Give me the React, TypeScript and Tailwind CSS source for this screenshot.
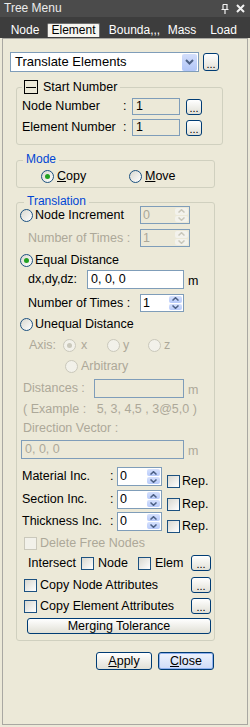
import React from 'react';

type RP = { checked?: boolean; disabled?: boolean };

function Radio({ checked = false, disabled = false }: RP) {
  return (
    <span
      className={
        disabled
          ? 'flex h-[13px] w-[13px] shrink-0 items-center justify-center rounded-full border border-[#cac8bb] bg-[#f2f1ea]'
          : 'flex h-[13px] w-[13px] shrink-0 items-center justify-center rounded-full border border-[#1c5180] bg-linear-to-br from-[#d9d8d0] to-white'
      }
    >
      {checked && (
        <span className={disabled ? 'h-[5px] w-[5px] rounded-full bg-[#cac8bb]' : 'h-[5px] w-[5px] rounded-full bg-[#21a121]'} />
      )}
    </span>
  );
}

function Check({ disabled = false }: { disabled?: boolean }) {
  return (
    <span
      className={
        disabled
          ? 'block h-[13px] w-[13px] shrink-0 border border-[#cac8bb] bg-[#f2f1ea]'
          : 'block h-[13px] w-[13px] shrink-0 border border-[#1c5180] bg-linear-to-br from-[#d9d8d0] to-white'
      }
    />
  );
}

function Dots({ className }: { className: string }) {
  return (
    <div
      className={
        'flex shrink-0 items-end justify-center rounded-[3px] border border-[#003c74] bg-linear-to-b from-white to-[#e1e0d6] pb-[3px] text-[11px] leading-[6px] text-black ' +
        className
      }
    >
      ...
    </div>
  );
}

function Chev({ up, color }: { up?: boolean; color: string }) {
  return (
    <svg width="7" height="4" viewBox="0 0 7 4">
      <path d={up ? 'M0.5 3.5 L3.5 0.7 L6.5 3.5' : 'M0.5 0.5 L3.5 3.3 L6.5 0.5'} fill="none" stroke={color} strokeWidth="1.5" />
    </svg>
  );
}

function SpinBtns({ disabled = false }: { disabled?: boolean }) {
  const c = disabled ? '#cac8bb' : '#4d6185';
  const b = disabled
    ? 'flex flex-1 items-center justify-center rounded-[2px] bg-[#f3f2ec]'
    : 'flex flex-1 items-center justify-center rounded-[2px] bg-linear-to-b from-[#d6e1fc] to-[#b7cafa]';
  return (
    <div className="flex w-[15px] shrink-0 flex-col gap-[1px] p-[1px]">
      <div className={b}>
        <Chev up color={c} />
      </div>
      <div className={b}>
        <Chev color={c} />
      </div>
    </div>
  );
}

const sep = 'Bounda,,,';

export default function App() {
  return (
    <div className="flex h-[727px] w-[250px] flex-col overflow-hidden bg-[#ece9d8] font-['Liberation_Sans',Arial,sans-serif] text-[12.5px] text-black">
      {/* Title bar */}
      <div className="flex h-[17px] shrink-0 items-center bg-[#4b4b4b] pl-[4px] text-[12px] text-[#ececec]">
        <span className="flex-1 leading-[17px]">Tree Menu</span>
        <svg width="8" height="10" viewBox="0 0 8 10" className="mr-[7px]">
          <path d="M2 0.5 H6 V5 M2 0.5 V5 M0.5 5.5 H7.5 M4 5.5 V10" fill="none" stroke="#f2f2f2" strokeWidth="1.2" />
        </svg>
        <svg width="9" height="9" viewBox="0 0 9 9" className="mr-[5px]">
          <path d="M1 1 L8 8 M8 1 L1 8" fill="none" stroke="#f2f2f2" strokeWidth="2" />
        </svg>
      </div>

      {/* Tabs */}
      <div className="flex h-[21px] shrink-0 items-end bg-[#3d3d3d] pb-[1px] pl-[5px] text-[12px]">
        <div className="h-[14px] w-[40px] text-center leading-[14px] text-white">Node</div>
        <div className="ml-[2px] h-[14px] w-[53px] rounded-t-[2px] border border-b-0 border-[#6e6e6e] bg-[#f6f5f0] text-center leading-[13px] text-black">
          Element
        </div>
        <div className="ml-[2px] h-[14px] w-[65px] text-center leading-[14px] text-white">{sep}</div>
        <div className="h-[14px] w-[30px] text-center leading-[14px] text-white">Mass</div>
        <div className="h-[14px] w-[53px] text-center leading-[14px] text-white">Load</div>
      </div>

      {/* Body */}
      <div className="flex flex-1 flex-col px-[2px] pb-[2px]">
        <div className="flex flex-1 flex-col border border-[#a9a8a2] bg-[#ece9d8]">
          {/* Dropdown */}
          <div className="ml-[7px] mt-[13px] flex items-center">
            <div className="flex h-[20px] w-[189px] items-center border border-[#7f9db9] bg-white pr-[1px]">
              <span className="flex-1 pl-[4px] text-[13px] leading-[18px]">Translate Elements</span>
              <div className="flex h-[17px] w-[15px] items-center justify-center rounded-[2px] bg-linear-to-b from-[#d3defb] to-[#b2c6f7]">
                <svg width="9" height="6" viewBox="0 0 9 6">
                  <path d="M1 1 L4.5 4.5 L8 1" fill="none" stroke="#4d6185" strokeWidth="2" />
                </svg>
              </div>
            </div>
            <Dots className="ml-[4px] h-[18px] w-[16px]" />
          </div>

          {/* Start Number group */}
          <div className="relative ml-[13px] mt-[15px] h-[58px] w-[207px] shrink-0 rounded-[3px] border border-[#d0d0bf]">
            <div className="absolute -top-[8px] left-[5px] flex h-[14px] items-center bg-[#ece9d8] pl-[2px] pr-[3px]">
              <span className="flex h-[14px] w-[14px] items-center justify-center border border-black bg-[#ece9d8]">
                <span className="h-[1px] w-[10px] bg-black" />
              </span>
              <span className="ml-[5px] leading-[13px]">Start Number</span>
            </div>
            <div className="mt-[10px] flex h-[17px] items-center pl-[5px] leading-[13px]">
              <span className="w-[101px]">Node Number</span>
              <span className="w-[9px]">:</span>
              <div className="h-[17px] w-[48px] border border-[#7f9db9] pl-[3px] leading-[15px]">1</div>
              <Dots className="ml-[6px] h-[16px] w-[16px]" />
            </div>
            <div className="mt-[4px] flex h-[17px] items-center pl-[5px] leading-[13px]">
              <span className="w-[101px]">Element Number</span>
              <span className="w-[9px]">:</span>
              <div className="h-[17px] w-[48px] border border-[#7f9db9] pl-[3px] leading-[15px]">1</div>
              <Dots className="ml-[6px] h-[16px] w-[16px]" />
            </div>
          </div>

          {/* Mode group */}
          <div className="relative ml-[13px] mt-[15px] h-[28px] w-[199px] shrink-0 rounded-[3px] border border-[#d0d0bf]">
            <div className="absolute -top-[8px] left-[6px] h-[12px] bg-[#ece9d8] px-[3px] text-[12px] leading-[12px] text-[#0046d5]">
              Mode
            </div>
            <div className="mt-[6px] flex h-[18px] items-center pl-[24px] leading-[13px]">
              <Radio checked />
              <span className="ml-[3px] w-[72px]">
                <u>C</u>opy
              </span>
              <Radio />
              <span className="ml-[3px]">
                <u>M</u>ove
              </span>
            </div>
          </div>

          {/* Translation group */}
          <div className="relative ml-[13px] mt-[14px] flex h-[439px] w-[199px] shrink-0 flex-col rounded-[3px] border border-[#d0d0bf] leading-[13px]">
            <div className="absolute -top-[8px] left-[7px] h-[12px] bg-[#ece9d8] px-[3px] text-[12px] leading-[12px] text-[#0046d5]">
              Translation
            </div>

            {/* Node Increment */}
            <div className="mt-[3px] flex h-[18px] items-center pl-[3px]">
              <div className="flex w-[120px] items-center">
                <Radio />
                <span className="ml-[2px]">Node Increment</span>
              </div>
              <div className="flex h-[18px] w-[50px] border border-[#7f9db9]">
                <span className="flex-1 pl-[2px] leading-[16px] text-[#aca899]">0</span>
                <SpinBtns disabled />
              </div>
            </div>

            {/* Number of Times disabled */}
            <div className="mt-[5px] flex h-[18px] items-center pl-[11px]">
              <span className="w-[112px] text-[#aca899]">Number of Times :</span>
              <div className="flex h-[18px] w-[50px] border border-[#7f9db9]">
                <span className="flex-1 pl-[2px] leading-[16px] text-[#aca899]">1</span>
                <SpinBtns disabled />
              </div>
            </div>

            {/* Equal Distance */}
            <div className="mt-[4px] flex h-[18px] items-center pl-[3px]">
              <Radio checked />
              <span className="ml-[2px]">Equal Distance</span>
            </div>

            {/* dx dy dz */}
            <div className="mt-[1px] flex h-[19px] items-center pl-[11px]">
              <span className="w-[59px]">dx,dy,dz:</span>
              <div className="h-[19px] w-[97px] border border-[#7f9db9] bg-white pl-[3px] leading-[17px]">0, 0, 0</div>
              <span className="ml-[4px] mt-[3px]">m</span>
            </div>

            {/* Number of Times */}
            <div className="mt-[5px] flex h-[18px] items-center pl-[11px]">
              <span className="w-[112px]">Number of Times :</span>
              <div className="flex h-[18px] w-[44px] border border-[#7f9db9] bg-white">
                <span className="flex-1 pl-[2px] leading-[16px]">1</span>
                <SpinBtns />
              </div>
            </div>

            {/* Unequal */}
            <div className="mt-[3px] flex h-[18px] items-center pl-[3px]">
              <Radio />
              <span className="ml-[2px]">Unequal Distance</span>
            </div>

            {/* Axis */}
            <div className="mt-[3px] flex h-[18px] items-center pl-[12px] text-[#aca899]">
              <span className="w-[34px]">Axis:</span>
              <div className="flex w-[44px] items-center">
                <Radio checked disabled />
                <span className="ml-[5px]">x</span>
              </div>
              <div className="flex w-[41px] items-center">
                <Radio disabled />
                <span className="ml-[3px]">y</span>
              </div>
              <div className="flex items-center">
                <Radio disabled />
                <span className="ml-[3px]">z</span>
              </div>
            </div>

            {/* Arbitrary */}
            <div className="mt-[3px] flex h-[18px] items-center pl-[48px] text-[#aca899]">
              <Radio disabled />
              <span className="ml-[3px]">Arbitrary</span>
            </div>

            {/* Distances */}
            <div className="mt-[4px] flex h-[19px] items-center pl-[6px] text-[#aca899]">
              <span className="w-[71px]">Distances :</span>
              <div className="h-[19px] w-[90px] border border-[#7f9db9]" />
              <span className="ml-[4px] mt-[3px]">m</span>
            </div>

            {/* Example */}
            <div className="mt-[2px] flex h-[18px] items-center whitespace-pre pl-[6px] text-[#aca899]">
              {'( Example :   5, 3, 4,5 , 3@5,0 )'}
            </div>

            {/* Direction Vector */}
            <div className="mt-[1px] flex h-[18px] items-center pl-[6px] text-[#aca899]">Direction Vector :</div>

            <div className="mt-[3px] flex h-[19px] items-center pl-[4px] text-[#aca899]">
              <div className="h-[19px] w-[163px] border border-[#7f9db9] pl-[3px] leading-[17px]">0, 0, 0</div>
              <span className="ml-[4px] mt-[3px]">m</span>
            </div>

            {/* Material / Section / Thickness */}
            {[
              { label: 'Material Inc.', mt: 'mt-[8px]' },
              { label: 'Section Inc.', mt: 'mt-[4px]' },
              { label: 'Thickness Inc.', mt: 'mt-[3px]' },
            ].map((r) => (
              <div key={r.label} className={'flex h-[19px] items-center pl-[5px] ' + r.mt}>
                <span className="w-[88px] whitespace-nowrap">{r.label}</span>
                <span className="w-[7px]">:</span>
                <div className="flex h-[19px] w-[45px] border border-[#7f9db9] bg-white">
                  <span className="flex-1 pl-[2px] leading-[17px]">0</span>
                  <SpinBtns />
                </div>
                <div className="ml-[5px] mt-[9px] flex items-center">
                  <Check />
                  <span className="ml-[2px]">Rep.</span>
                </div>
              </div>
            ))}

            {/* Delete Free Nodes */}
            <div className="mt-[3px] flex h-[18px] items-center pl-[7px] text-[#aca899]">
              <Check disabled />
              <span className="ml-[3px]">Delete Free Nodes</span>
            </div>

            {/* Intersect */}
            <div className="mt-[3px] flex h-[16px] items-center pl-[11px]">
              <span className="w-[53px]">Intersect</span>
              <div className="flex w-[57px] items-center">
                <Check />
                <span className="ml-[4px]">Node</span>
              </div>
              <div className="flex w-[53px] items-center">
                <Check />
                <span className="ml-[4px]">Elem</span>
              </div>
              <Dots className="h-[16px] w-[20px]" />
            </div>

            {/* Copy Node Attributes */}
            <div className="mt-[6px] flex h-[16px] items-center pl-[7px]">
              <div className="flex w-[167px] items-center">
                <Check />
                <span className="ml-[3px]">Copy Node Attributes</span>
              </div>
              <Dots className="h-[16px] w-[20px]" />
            </div>

            {/* Copy Element Attributes */}
            <div className="mt-[5px] flex h-[16px] items-center pl-[7px]">
              <div className="flex w-[167px] items-center">
                <Check />
                <span className="ml-[3px]">Copy Element Attributes</span>
              </div>
              <Dots className="h-[16px] w-[20px]" />
            </div>

            {/* Merging Tolerance */}
            <div className="mt-[4px] flex pl-[10px]">
              <div className="flex h-[16px] w-[184px] items-center justify-center rounded-[3px] border border-[#003c74] bg-linear-to-b from-white to-[#e1e0d6] leading-[14px]">
                Merging Tolerance
              </div>
            </div>
          </div>

          {/* Apply / Close */}
          <div className="mt-[11px] flex pl-[93px]">
            <div className="flex h-[18px] w-[56px] items-center justify-center rounded-[3px] border border-[#003c74] bg-linear-to-b from-white to-[#e1e0d6] leading-[16px]">
              <span>
                <u>A</u>pply
              </span>
            </div>
            <div className="ml-[6px] flex h-[18px] w-[56px] items-center justify-center rounded-[3px] border border-[#003c74] bg-linear-to-b from-[#eef3fd] to-[#cfdcf7] leading-[14px] shadow-[inset_0_0_0_1px_#8fb0ee]">
              <span>
                <u>C</u>lose
              </span>
            </div>
          </div>
        </div>
      </div>
    </div>
  );
}
